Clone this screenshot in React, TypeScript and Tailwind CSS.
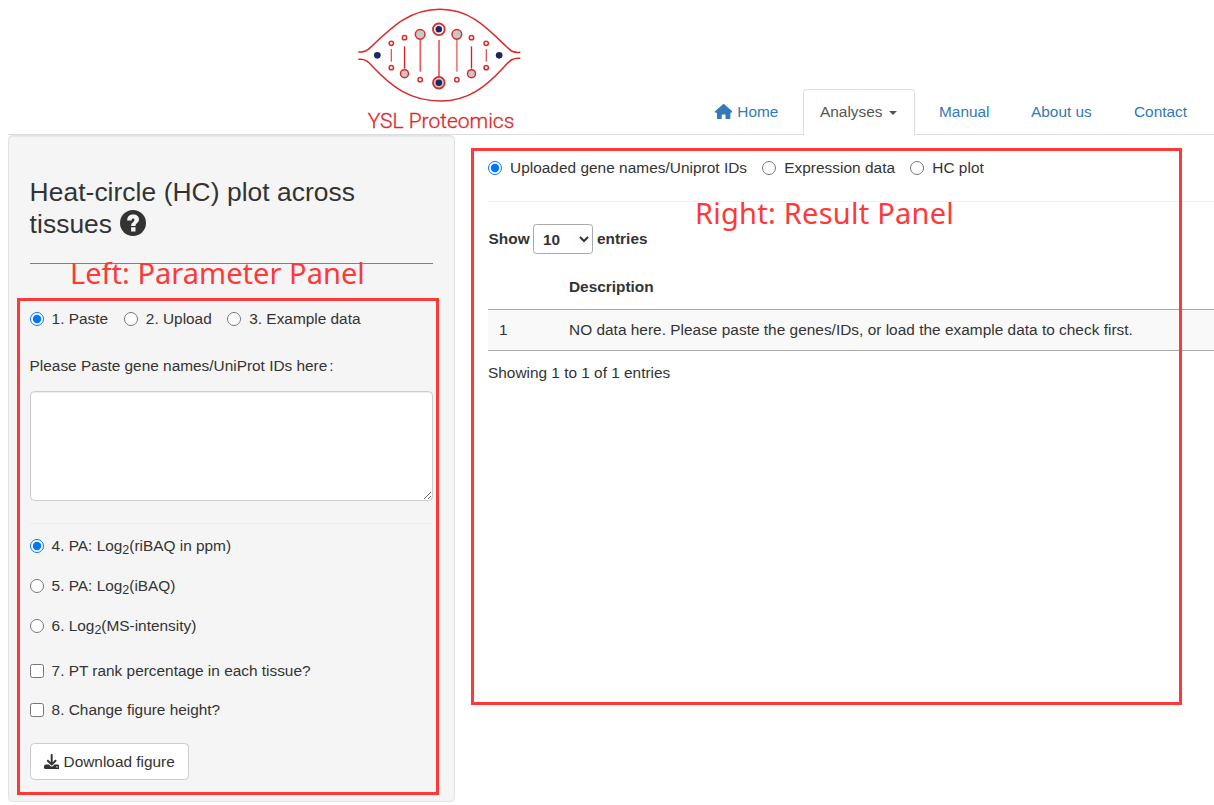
import React from "react";
import { FaHouse, FaDownload } from "react-icons/fa6";

const RADIO = "m-0 h-[14px] w-[14px] shrink-0";

function Choice({ name, checked, children, className = "" }: { name: string; checked?: boolean; children: React.ReactNode; className?: string }) {
  return (
    <label className={`flex h-[22px] items-center gap-[8px] whitespace-nowrap ${className}`}>
      <input type="radio" name={name} defaultChecked={checked} className={RADIO} />
      <span>{children}</span>
    </label>
  );
}

function Check({ children, className = "" }: { children: React.ReactNode; className?: string }) {
  return (
    <label className={`flex h-[22px] items-center gap-[8px] ${className}`}>
      <input type="checkbox" className={RADIO} />
      <span>{children}</span>
    </label>
  );
}

function Sub2() {
  return <sub className="relative -bottom-[3px] align-baseline text-[12.5px] leading-[0]">2</sub>;
}

function Logo() {
  const red = "#db2a2a";
  const bars: [number, number, number, number, string][] = [
    [124, 147, 185, 4, "#e25b5b"], [163.5, 139, 206, 4, "#d92020"], [211, 118, 215, 5, "#e25b5b"],
    [267, 120, 232, 6, "#e87676"], [320.5, 118, 215, 5.5, "#ea8585"], [364.5, 139, 206, 4, "#d92020"], [409, 147, 185, 4, "#e25b5b"],
  ];
  const small: [number, number][] = [[124, 130], [163.5, 113], [364.5, 113], [408.5, 130], [124, 203], [210.5, 239], [320.5, 239], [408.5, 203]];
  const big: [number, number, number][] = [[210.5, 103, 14.5], [320.5, 103, 14.5], [163.5, 221, 12], [364.5, 221, 12]];
  return (
    <svg viewBox="0 0 540 399" className="h-[133px] w-[180px] shrink-0" preserveAspectRatio="xMinYMin meet">
      <g fill="none" stroke={red} strokeWidth="4.6">
        <path d="M25 155C43 158 51 152 65 139C128 79 181 28 270 28C355 28 404 76 459 130C480 150 486 160 511 157" />
        <path d="M25 178C44 175 54 184 69 201C125 260 180 303 272 303C357 303 410 257 460 203C481 180 489 172 511 175" />
      </g>
      {bars.map(([x, a, b, w, c]) => <line key={x} x1={x} x2={x} y1={a} y2={b} stroke={c} strokeWidth={w} />)}
      {small.map(([x, y]) => <circle key={`${x}-${y}`} cx={x} cy={y} r="6.5" fill="#fff" stroke={red} strokeWidth="4.5" />)}
      {big.map(([x, y, r]) => <circle key={`${x}-${y}`} cx={x} cy={y} r={r} fill="#c8c8c8" stroke={red} strokeWidth="4.5" />)}
      {[88, 248].map((y) => (
        <g key={y}>
          <circle cx="266.5" cy={y} r="17.5" fill={y === 88 ? "#fff" : "#c8c8c8"} stroke={red} strokeWidth="5.5" />
          <circle cx="266.5" cy={y} r="9.8" fill="#1f2560" />
        </g>
      ))}
      <circle cx="82" cy="166" r="10" fill="#1f2560" />
      <circle cx="447.5" cy="166" r="10" fill="#1f2560" />
      <text x="53" y="383" textLength="440" lengthAdjust="spacingAndGlyphs" fontSize="62" fill={red} stroke={red} strokeWidth="1" className="font-[Roboto] font-light">YSL Proteomics</text>
    </svg>
  );
}

const LINK = "mb-px flex h-[45px] items-center whitespace-nowrap text-[#337ab7]";

export default function App() {
  return (
    <div className="relative h-[805px] w-[1214px] overflow-hidden bg-white font-['Liberation_Sans',Arial,sans-serif] text-[15.4px] leading-[22px] text-[#333]">
      <header className="ml-2 flex h-[135px] border-b border-[#ddd]">
        <div className="ml-[342px]"><Logo /></div>
        <nav className="-mb-px ml-[185px] flex items-end">
          <a className={`${LINK} w-[88px]`}><FaHouse className="mr-[5px] h-[15.4px] w-[17.3px] shrink-0" />Home</a>
          <a className="flex h-[46px] w-[112px] items-center rounded-t-[4.4px] border border-b-0 border-[#ddd] bg-white pb-[2px] pl-[16px] text-[#555]">
            Analyses
            <span className="ml-[6.5px] mt-[3px] border-x-[4px] border-t-[4px] border-x-transparent border-t-[#555]" />
          </a>
          <a className={`${LINK} ml-[24px] w-[92px]`}>Manual</a>
          <a className={`${LINK} w-[103px]`}>About us</a>
          <a className={LINK}>Contact</a>
        </nav>
      </header>

      <main className="ml-2 flex items-start">
        <aside className="h-[667px] w-[447px] shrink-0 rounded-[4.4px] border border-[#e3e3e3] bg-[#f5f5f5] pl-[20.6px] pr-[21px] pt-[40px] shadow-[inset_0_1px_1px_rgba(0,0,0,0.05)]">
          <h3 className="flex h-[64px] flex-col text-[26.4px] leading-[32px] tracking-[0.05px]">
            <span className="whitespace-nowrap">Heat-circle (HC) plot across</span>
            <span className="flex items-center">
              tissues
              <svg viewBox="0 0 26 26" className="-mt-[3px] ml-[8px] h-[26px] w-[26px]">
                <circle cx="13" cy="13" r="13" fill="#333" />
                <path d="M7.2 10.4C7.2 6.4 9.6 4.6 13.2 4.6C16.8 4.6 19 6.6 19 9.6C19 13.2 15.5 13.2 15.5 15.9H11.1C11.1 12.3 14.4 12.1 14.4 9.9C14.4 8.9 14 8.4 13.1 8.4C12 8.4 11.6 9.2 11.6 10.4ZM11.1 17.3H15.5V21.5H11.1Z" fill="#f5f5f5" />
              </svg>
            </span>
          </h3>
          <hr className="mt-[23px] border-t border-[#808080]" />
          <div className="mt-[44px] flex">
            <Choice name="src" checked>1. Paste</Choice>
            <Choice name="src" className="ml-[15.8px]">2. Upload</Choice>
            <Choice name="src" className="ml-[15.5px]">3. Example data</Choice>
          </div>
          <div className="mt-[25px]">Please Paste gene names/UniProt IDs here<span className="ml-[2px]">:</span></div>
          <textarea className="mt-[14px] block h-[110px] w-[403px] resize rounded-[4.4px] border border-[#ccc] bg-white shadow-[inset_0_1px_1px_rgba(0,0,0,0.075)]" />
          <hr className="mt-[22px] border-t border-[#eee]" />
          <Choice name="pa" checked className="mt-[11px]">4. PA: Log<Sub2 />(riBAQ in ppm)</Choice>
          <Choice name="pa" className="mt-[18px]">5. PA: Log<Sub2 />(iBAQ)</Choice>
          <Choice name="pa" className="mt-[18px]">6. Log<Sub2 />(MS-intensity)</Choice>
          <Check className="mt-[23px]">7. PT rank percentage in each tissue?</Check>
          <Check className="mt-[17px]">8. Change figure height?</Check>
          <button className="mt-[22px] flex h-[37px] w-[159px] items-center rounded-[4.4px] border border-[#ccc] bg-white pl-[13px]">
            <FaDownload className="mr-[4.6px] h-[15.4px] w-[15.4px] shrink-0" />
            <span className="whitespace-nowrap">Download figure</span>
          </button>
        </aside>

        <section className="ml-[33px] min-w-0 flex-1">
          <div className="mt-[22px] flex tracking-[0.03px]">
            <Choice name="view" checked>Uploaded gene names/Uniprot IDs</Choice>
            <Choice name="view" className="ml-[15.2px]">Expression data</Choice>
            <Choice name="view" className="ml-[15.2px]">HC plot</Choice>
          </div>
          <hr className="mt-[22px] border-t border-[#eee]" />
          <label className="mt-[22px] flex h-[30px] items-center pl-[0.6px] font-bold">
            Show
            <select className="ml-[3.4px] mr-[4px] h-[30px] w-[60px] rounded-[3.3px] border border-[#aaa] bg-transparent p-[5px] font-bold">
              <option>10</option>
            </select>
            entries
          </label>
          <table className="mt-[11px] w-full border-collapse text-left">
            <thead>
              <tr className="h-[44px] border-b border-[#aaa]">
                <th className="w-[81px]" />
                <th className="font-bold">Description</th>
              </tr>
            </thead>
            <tbody>
              <tr className="h-[41px] border-b border-[#aaa] bg-[#f9f9f9]">
                <td className="pl-[11px]">1</td>
                <td className="whitespace-nowrap tracking-[0.022px]">NO data here. Please paste the genes/IDs, or load the example data to check first.</td>
              </tr>
            </tbody>
          </table>
          <div className="mt-[11px]">Showing 1 to 1 of 1 entries</div>
        </section>
      </main>

      <div className="pointer-events-none absolute left-[17px] top-[298px] h-[497px] w-[422px] border-[3px] border-[#ff3838]" />
      <div className="pointer-events-none absolute left-[471px] top-[148px] h-[557px] w-[711px] border-[3px] border-[#ff3838]" />
      <div className="pointer-events-none absolute left-[70px] top-[253px] whitespace-nowrap font-['Noto_Sans',sans-serif] text-[29px] leading-[40px] tracking-[0.03px] text-[#ff3838]">Left: Parameter Panel</div>
      <div className="pointer-events-none absolute left-[695px] top-[193px] whitespace-nowrap font-['Noto_Sans',sans-serif] text-[29px] leading-[40px] tracking-[0.25px] text-[#ff3838]">Right: Result Panel</div>
    </div>
  );
}
